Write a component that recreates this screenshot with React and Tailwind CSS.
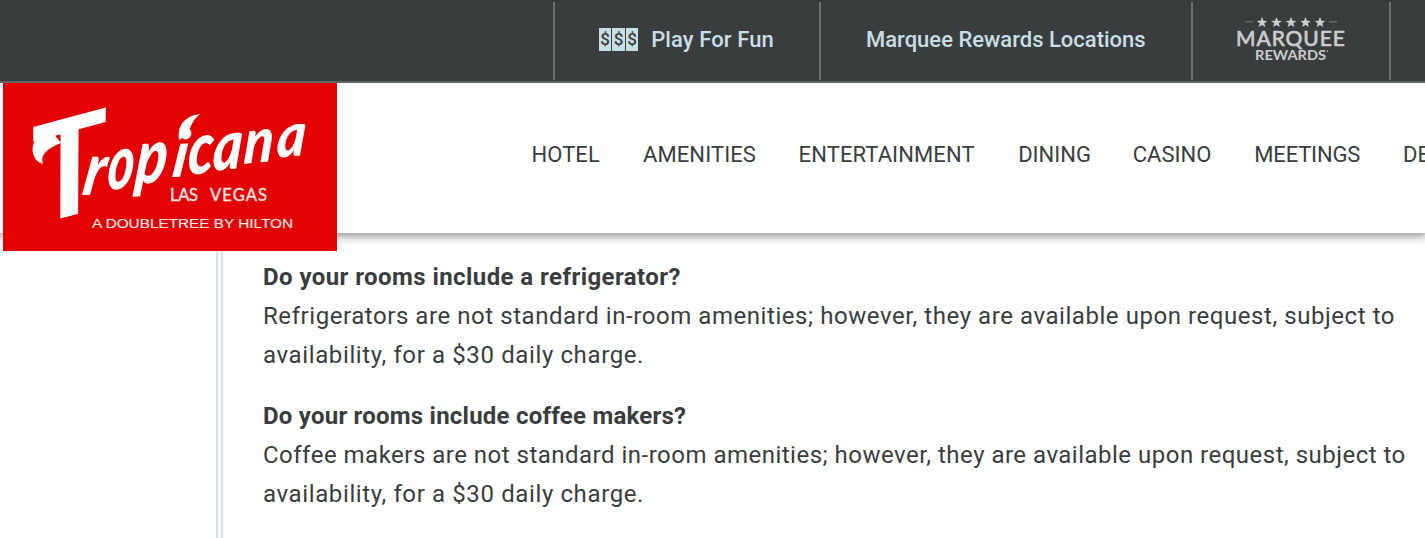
const LINKS = [
  ['HOTEL', 'w-[68px] tracking-[0.1px]'],
  ['AMENITIES', 'w-[112px] tracking-[0.1px]'],
  ['ENTERTAINMENT', 'w-[176px] tracking-[0.1px]'],
  ['DINING', 'w-[71px] tracking-[0px]'],
  ['CASINO', 'w-[78px] tracking-[0px]'],
  ['MEETINGS', 'w-[105px] tracking-[-0.2px]'],
  ['DEALS', 'w-[68px] tracking-[0px]'],
];

const FAQ = [
  {
    q: 'Do your rooms include a refrigerator?',
    headTracking: 'tracking-[0.43px]',
    lineTracking: 'tracking-[0.56px]',
    lines: [
      'Refrigerators are not standard in-room amenities; however, they are available upon request, subject to',
      'availability, for a $30 daily charge.',
    ],
  },
  {
    q: 'Do your rooms include coffee makers?',
    headTracking: 'tracking-[0.23px]',
    lineTracking: 'tracking-[0.49px]',
    lines: [
      'Coffee makers are not standard in-room amenities; however, they are available upon request, subject to',
      'availability, for a $30 daily charge.',
    ],
  },
];

// glyph, x, baseline, size, rotation, horizontal scale
const SCRIPT = [
  ['r', 78, 112, 74, 0, 0.8],
  ['o', 103, 107, 76, -4, 0.66],
  ['p', 131, 101, 76, -4, 0.76],
  ['i', 168, 94, 64, -2, 0.9],
  ['c', 184, 92, 72, -6, 0.78],
  ['a', 209, 88, 68, -6, 0.82],
  ['n', 240, 81, 62, -6, 0.88],
  ['a', 273, 75, 60, -6, 0.92],
];

function Logo() {
  return (
    <svg viewBox="0 0 334 168" className="block h-[168px] w-[334px] bg-[#e20000]" role="img" aria-label="Tropicana Las Vegas">
      <g fill="#fff" fontFamily="Lato, sans-serif" fontStyle="italic" fontWeight="900">
        <text transform="translate(33 142) rotate(-15) skewX(-8) scale(1.08 1)" fontSize="132" fontWeight="700">T</text>
        {SCRIPT.map(([c, x, y, s, r, k], i) => (
          <text key={i} transform={`translate(${x} ${y}) rotate(${r}) skewX(-10) scale(${k} 1)`} fontSize={s}>{c}</text>
        ))}
      </g>
      <path fill="#fff" d="M176 57C174 42 182 33 197 31C190 37 187 43 186 50Q182 54 176 57Z" />
      <path fill="#fff" d="M46 45C32 51 27 64 31 73C33 78 37 80 40 81C37 72 43 66 58 60Z" />
      <g fill="#fce4e4">
        <g fontFamily="Lato, sans-serif" fontSize="16.500" fontWeight="400" stroke="#fce4e4" strokeWidth=".4">
          <text x="167" y="118" textLength="28" lengthAdjust="spacing">LAS</text>
          <text x="207" y="118" textLength="57" lengthAdjust="spacing">VEGAS</text>
        </g>
        <text x="89" y="145" fontFamily="Liberation Sans, sans-serif" fontSize="12.500" textLength="201" lengthAdjust="spacingAndGlyphs" stroke="#fce4e4" strokeWidth=".2">A DOUBLETREE BY HILTON</text>
      </g>
    </svg>
  );
}

function Dollars() {
  return (
    <span className="flex h-[23px] gap-px">
      {[0, 1, 2].map((i) => (
        <span key={i} className="flex w-[12.400px] items-center justify-center bg-[#c9dfe7] font-[Roboto,sans-serif] text-[17px] font-medium leading-none text-[#3a3d3e]">$</span>
      ))}
    </span>
  );
}

function Marquee() {
  return (
    <svg viewBox="0 0 110 46" className="block h-[46px] w-[110px]" role="img" aria-label="Marquee Rewards">
      <g fill="#cdcdcd">
        {[26, 40.5, 55, 69.5, 84].map((x) => (
          <path key={x} transform={`translate(${x} 6.500)`} d="M0-5.500 1.500-1.800 5.300-1.600 2.300.8 3.300 4.500 0 2.400-3.300 4.500-2.300.8-5.300-1.600-1.500-1.800Z" />
        ))}
        <path d="M9 5h8v1.500H9zM93 5h8v1.500h-8z" opacity=".3" />
        <text x="0" y="30" fontFamily="Lato, sans-serif" fontWeight="400" fontSize="21" textLength="109" lengthAdjust="spacing" stroke="#cdcdcd" strokeWidth=".7">MARQUEE</text>
        <text x="19" y="44" fontFamily="Lato, sans-serif" fontWeight="700" fontSize="13.500" textLength="71" lengthAdjust="spacingAndGlyphs">REWARDS</text>
        <circle cx="91.500" cy="35" r=".7" />
      </g>
    </svg>
  );
}

export default function App() {
  return (
    <div className="h-[538px] w-[1425px] overflow-hidden bg-white font-[Roboto,sans-serif] text-[#3a3d3e]">
      <div className="flex h-[83px] border-b-2 border-[#5c6564] bg-[#3a3d3e] pt-[2px]">
        <div className="w-[553px] shrink-0" />
        <a className="flex h-[78px] w-[266px] shrink-0 items-center border-l-2 border-[#697271] pb-[4px] pl-[44px] text-[#c9dfe7]">
          <Dollars />
          <span className="ml-[13px] whitespace-nowrap text-[22px] font-medium tracking-[0.1px]">Play For Fun</span>
        </a>
        <a className="flex h-[78px] w-[372px] shrink-0 items-center border-l-2 border-[#697271] pb-[4px] pl-[45px] text-[#c9dfe7]">
          <span className="whitespace-nowrap text-[22px] font-medium">Marquee Rewards Locations</span>
        </a>
        <a className="flex h-[78px] w-[198px] shrink-0 items-center border-l-2 border-[#697271] pb-[4px] pl-[43px]">
          <Marquee />
        </a>
        <div className="h-[78px] flex-1 border-l-2 border-[#697271]" />
      </div>

      <header className="relative z-10 flex h-[150px] bg-white pl-[3px] shadow-[0_1px_9px_2px_rgba(0,0,0,0.45)] [clip-path:inset(0_0_-30px_0)]">
        <div className="h-[168px] w-[334px] shrink-0">
          <Logo />
        </div>
        <nav className="ml-[194.400px] flex h-[142px] items-center gap-[43.600px] text-[22px]">
          {LINKS.map(([label, cls]) => (
            <a key={label} className={`${cls} shrink-0 whitespace-nowrap`}>{label}</a>
          ))}
        </nav>
      </header>

      <main className="flex h-[305px]">
        <div className="ml-[216px] w-[7px] shrink-0 border-x-2 border-[#d0e0e6]" />
        <div className="flex flex-col gap-[22px] pl-[40px] pt-[25px] text-[24px] leading-[39px]">
          {FAQ.map(({ q, headTracking, lineTracking, lines: [first, second] }) => (
            <section key={q} className="whitespace-nowrap">
              <h3 className={`text-[24px] font-bold ${headTracking}`}>{q}</h3>
              <p className={lineTracking}>{first}</p>
              <p className="tracking-[0.62px]">{second}</p>
            </section>
          ))}
        </div>
      </main>
    </div>
  );
}
